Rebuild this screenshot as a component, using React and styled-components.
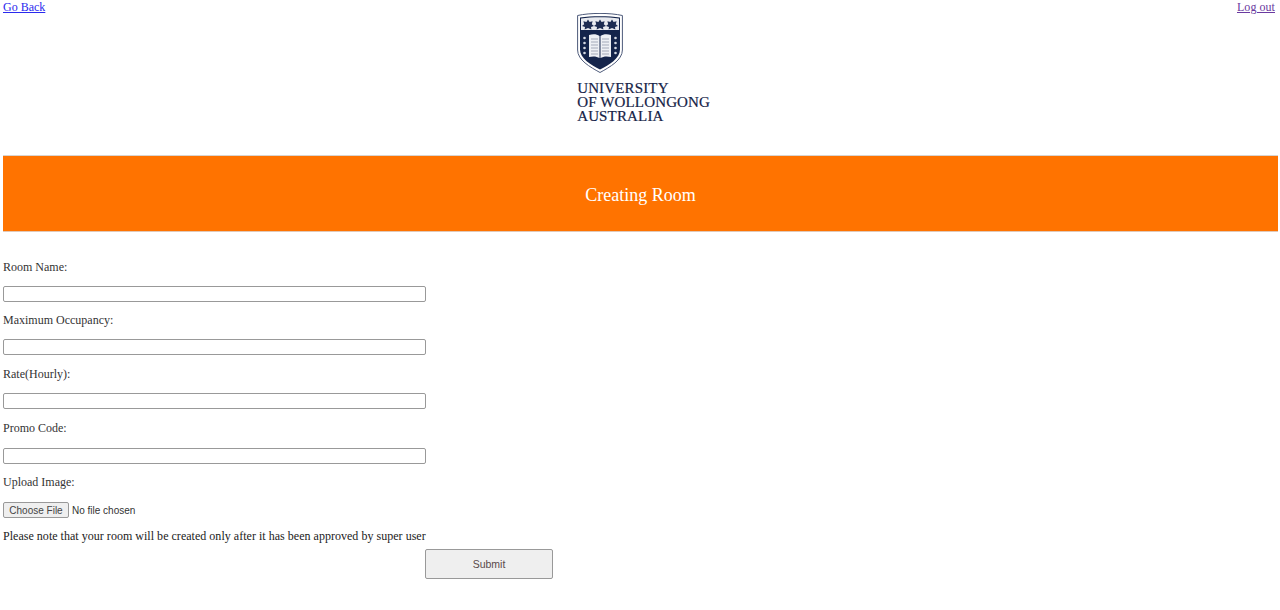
import React from 'react';
import styled, { createGlobalStyle } from 'styled-components';

const GlobalStyle = createGlobalStyle`
  html, body { margin: 0; padding: 0; background: #fff; }
  body { font-family: "Liberation Serif", "Times New Roman", serif; font-size: 12px; color: #222; }
`;

const Page = styled.div`
  padding: 0 2px 0 3px;
  height: 610px;
  box-sizing: border-box;
  overflow: hidden;
`;

const TopBar = styled.div`
  display: flex;
  justify-content: space-between;
  align-items: flex-start;
  height: 155px;
`;

const NavLink = styled.a`
  font-size: 12px;
  line-height: 14px;
  margin-right: ${p => (p.$visited ? '3px' : '0')};
  color: ${p => (p.$visited ? '#6a3aa0' : '#2a2aee')};
  letter-spacing: ${p => (p.$visited ? '0.05px' : '0')};
  text-decoration: underline;
  cursor: pointer;
`;

const Logo = styled.div`
  display: flex;
  flex-direction: column;
  width: 134px;
  margin-top: 13px;
  margin-left: 6px;
`;

const Crest = styled.svg`
  display: block;
  width: 46px;
  height: 60px;
`;

const Wordmark = styled.div`
  margin-top: 8px;
  font-family: "Liberation Serif", "Times New Roman", serif;
  font-size: 15px;
  line-height: 14px;
  color: #152347;
  white-space: nowrap;
  letter-spacing: 0.15px;
  -webkit-text-stroke: 0.2px #152347;
`;

const Banner = styled.div`
  display: flex;
  align-items: center;
  justify-content: center;
  box-sizing: border-box;
  height: 77px;
  padding-top: 4px;
  background: #ff7300;
  border-top: 1px solid #d8d4d0;
  border-bottom: 1px solid #e0c8b8;
  color: #fff;
  font-size: 18px;
  letter-spacing: 0.02px;
`;

const Form = styled.form`
  display: flex;
  flex-direction: column;
  align-items: flex-start;
  padding-top: 28px;
`;

const Label = styled.label`
  display: block;
  font-size: 12px;
  line-height: 14px;
  height: 14px;
  color: #333;
`;

const TextInput = styled.input`
  display: block;
  width: 423px;
  height: 16px;
  box-sizing: border-box;
  margin: ${p => p.$top || 12}px 0 ${p => p.$bottom || 12}px;
  padding: 1px 2px;
  border: 1px solid #999;
  border-radius: 2px;
  background: #fff;
`;

const FileRow = styled.div`
  display: flex;
  align-items: center;
  margin-top: 13px;
  font-family: "Liberation Sans", Arial, sans-serif;
  font-size: 10px;
  color: #333;
`;

const FileButton = styled.button`
  width: 66px;
  height: 16px;
  margin-right: 3px;
  padding: 0;
  box-sizing: border-box;
  border: 1px solid #999;
  border-radius: 2px;
  background: #efefef;
  font-family: inherit;
  font-size: 10px;
  color: #444;
`;

const Note = styled.p`
  margin: 11px 0 0;
  font-size: 12px;
  line-height: 14px;
  letter-spacing: 0.025px;
`;

const SubmitRow = styled.div`
  padding: 6px 0 0 422px;
`;

const SubmitButton = styled.button`
  width: 128px;
  height: 30px;
  box-sizing: border-box;
  border: 1px solid #999;
  border-radius: 2px;
  background: #efefef;
  font-family: "Liberation Sans", Arial, sans-serif;
  font-size: 10.5px;
  color: #5a4a4a;
`;

const flowers = [11, 23, 35];
const dots = [25, 30, 35, 40];
const pageLines = [26, 29, 32, 35, 38, 41];

const UowCrest = () => (
  <Crest viewBox="0 0 46 60">
    {/* outer outline, white gap, then the navy field */}
    <path d="M0.6 2.5 C13 -0.3 33 -0.3 45.4 2.5 L45.4 37 C45.4 47 33 54 23 59.5 C13 54 0.6 47 0.6 37 Z" fill="#fff" stroke="#4d5a7a" strokeWidth="1" />
    <path d="M3 4.6 C14 2.8 32 2.8 43 4.6 L43 36.5 C43 45.5 32 52 23 56.5 C14 52 3 45.5 3 36.5 Z" fill="#14244b" />
    <path d="M4 5.5 C15 3.9 31 3.9 42 5.5 L42 17 L4 17 Z" fill="#e8eaef" />
    {flowers.map(x => (
      <g key={x} fill="#1d2c52">
        <path d={`M${x} 6.5 l1.6 2.6 l3 -0.8 l-0.8 3 l2.2 1.8 l-3 1 l0.4 2.4 l-3.4 -1.6 l-3.4 1.6 l0.4 -2.4 l-3 -1 l2.2 -1.8 l-0.8 -3 l3 0.8 Z`} />
      </g>
    ))}
    <path d="M12 22 C16 20.5 20 21 22.5 23 L22.5 45 C20 43.4 16 43 12 44 Z" fill="#eef0f4" />
    <path d="M34 22 C30 20.5 26 21 23.5 23 L23.5 45 C26 43.4 30 43 34 44 Z" fill="#eef0f4" />
    {pageLines.map(y => (
      <path key={y} d={`M14 ${y} H21 M25 ${y} H32`} stroke="#a4aab9" strokeWidth="1" />
    ))}
    {dots.map(y => (
      <g key={y} fill="#d5d9e3">
        <circle cx="7.5" cy={y} r="1.3" />
        <circle cx="38.5" cy={y} r="1.3" />
      </g>
    ))}
  </Crest>
);

const App = () => (
  <Page>
    <GlobalStyle />
    <TopBar>
      <NavLink>Go Back</NavLink>
      <Logo>
        <UowCrest />
        <Wordmark>
          UNIVERSITY<br />OF WOLLONGONG<br />AUSTRALIA
        </Wordmark>
      </Logo>
      <NavLink $visited>Log out</NavLink>
    </TopBar>
    <Banner>Creating Room</Banner>
    <Form>
      <Label>Room Name:</Label>
      <TextInput type="text" $bottom={11} />
      <Label>Maximum Occupancy:</Label>
      <TextInput type="text" />
      <Label>Rate(Hourly):</Label>
      <TextInput type="text" />
      <Label>Promo Code:</Label>
      <TextInput type="text" $top={13} $bottom={11} />
      <Label>Upload Image:</Label>
      <FileRow>
        <FileButton type="button">Choose File</FileButton>
        No file chosen
      </FileRow>
      <Note>Please note that your room will be created only after it has been approved by super user</Note>
    </Form>
    <SubmitRow>
      <SubmitButton type="button">Submit</SubmitButton>
    </SubmitRow>
  </Page>
);

export default App;
